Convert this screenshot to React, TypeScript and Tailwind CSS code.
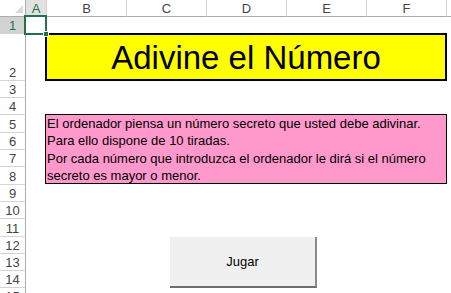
import React from 'react';

const cols = ['A', 'B', 'C', 'D', 'E', 'F', 'G'];
// alto de cada fila (incluye la línea inferior)
const rows = [17, 47, 17, 17, 18, 17, 17, 18, 17, 17, 18, 17, 17, 17, 17];

const lines = [
  'El ordenador piensa un número secreto que usted debe adivinar.',
  'Para ello dispone de 10 tiradas.',
  'Por cada número que introduzca el ordenador le dirá si el número',
  'secreto es mayor o menor.',
];

export default function App() {
  return (
    <div className="relative w-[451px] h-[293px] overflow-hidden bg-white font-['Liberation_Sans',Arial,sans-serif]">
      <div className="grid w-[527px] grid-cols-[26px_21px_repeat(6,80px)] grid-rows-[17px_17px_47px_17px_17px_18px_17px_17px_18px_17px_17px_18px_17px_17px_17px_17px]">
        {/* esquina */}
        <div className="relative border-r border-b border-[#ababab] bg-white">
          <div className="absolute right-[2px] bottom-[3px] w-0 h-0 border-l-[8px] border-l-transparent border-b-[8px] border-b-[#dadada]" />
        </div>
        {cols.map((c) => (
          <div
            key={c}
            className={
              'flex items-center justify-center border-b border-b-[#ababab] border-r border-r-[#d4d4d4] text-[13px] leading-none ' +
              (c === 'A' ? 'text-[#217346] bg-[#e1e1e1]' : 'text-[#444] bg-white')
            }
          >
            {c}
          </div>
        ))}

        {rows.map((h, r) => (
          <div
            key={r}
            style={{ gridColumn: 1, gridRow: r + 2 }}
            className={
              'flex items-end justify-center pb-[1px] border-r border-r-[#ababab] border-b border-b-[#d4d4d4] text-[13px] leading-none ' +
              (r === 0 ? 'bg-[#d2d2d2] text-[#217346]' : 'bg-white text-[#444]')
            }
          >
            {r + 1}
          </div>
        ))}

        {/* título */}
        <div className="col-start-3 col-end-8 row-start-3 row-end-4 -mt-px -ml-[2px] h-[48px] flex items-center justify-center border-2 border-black bg-[#ffff00]">
          <span className="text-[33px] leading-none text-black">Adivine el Número</span>
        </div>

        {/* instrucciones */}
        <div className="col-start-3 col-end-8 row-start-6 row-end-10 -mt-px -ml-[2px] h-[70px] border border-black bg-[#ff99cc] pl-px">
          {lines.map((l) => (
            <div key={l} className="text-[13px] leading-[17.25px] text-black whitespace-nowrap">
              {l}
            </div>
          ))}
        </div>
      </div>

      {/* selección A1 */}
      <div className="absolute left-[24px] top-[15px] w-[23px] h-[20px] border-2 border-[#217346]" />
      <div className="absolute left-[43px] top-[31px] w-[6px] h-[6px] bg-[#217346] border border-white" />

      {/* botón */}
      <button className="absolute left-[170px] top-[237px] w-[147px] h-[51px] bg-[#f0f0f0] border-r-2 border-b-2 border-r-[#8a8a8a] border-b-[#6e6e6e] text-[13px] text-black">
        Jugar
      </button>
    </div>
  );
}
